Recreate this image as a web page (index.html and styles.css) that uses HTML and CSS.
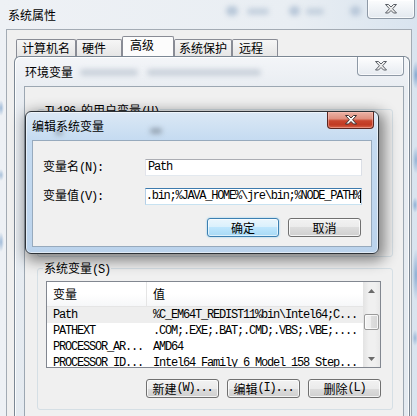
FILE: index.html
```html
<!DOCTYPE html>
<html lang="zh-CN">
<head>
<meta charset="utf-8">
<title>系统属性</title>
<link rel="stylesheet" href="styles.css">
</head>
<body>
<div class="win outer">
  <div class="tbar">
    <span class="title">系统属性</span>
    <span class="haze h1"></span><span class="haze h2"></span><span class="haze h3"></span><span class="haze h4"></span><span class="haze h5"></span>
    <div class="close idle"><svg width="12" height="10" viewBox="0 0 12 10"><path d="M0.5 0.5H3.5L6 3L8.5 0.5H11.5L7.6 4.75L11.5 9H8.5L6 6.5L3.5 9H0.5L4.4 4.75Z" fill="#ececec" stroke="#5a5f66"/></svg></div>
  </div>
  <div class="client">
    <div class="tabs">
      <div class="tab t1">计算机名</div>
      <div class="tab t2">硬件</div>
      <div class="tab t3 sel">高级</div>
      <div class="tab t4">系统保护</div>
      <div class="tab t5">远程</div>
    </div>
  </div>
</div>

<div class="win env">
  <div class="tbar">
    <span class="title">环境变量</span>
    <span class="haze e1"></span><span class="haze e2"></span>
    <div class="close idle"><svg width="12" height="10" viewBox="0 0 12 10"><path d="M0.5 0.5H3.5L6 3L8.5 0.5H11.5L7.6 4.75L11.5 9H8.5L6 6.5L3.5 9H0.5L4.4 4.75Z" fill="#ececec" stroke="#5a5f66"/></svg></div>
  </div>
  <div class="client">
    <div class="group user">
      <span class="glabel"><span class="m">TL186 </span>的用户变量<span class="m">(U)</span></span>
    </div>
    <div class="group sys">
      <span class="glabel">系统变量<span class="m">(S)</span></span>
      <div class="list">
        <div class="lv">
          <div class="lv-head"><div class="c1">变量</div><div class="c2">值</div></div>
          <div class="row sel"><div class="c1 m">Path</div><div class="c2 m">%C_EM64T_REDIST11%bin\Intel64;C...</div></div>
          <div class="row"><div class="c1 m">PATHEXT</div><div class="c2 m">.COM;.EXE;.BAT;.CMD;.VBS;.VBE;....</div></div>
          <div class="row"><div class="c1 m">PROCESSOR_AR...</div><div class="c2 m">AMD64</div></div>
          <div class="row"><div class="c1 m">PROCESSOR_ID...</div><div class="c2 m">Intel64 Family 6 Model 158 Step...</div></div>
        </div>
        <div class="vscroll">
          <div class="sb-btn"><svg width="7" height="4" viewBox="0 0 7 4"><path d="M0 4L3.5 0L7 4Z" fill="#6a6a6a"/></svg></div>
          <div class="thumb"></div>
          <div class="sb-fill"></div>
          <div class="sb-btn"><svg width="7" height="4" viewBox="0 0 7 4"><path d="M0 0L3.5 4L7 0Z" fill="#6a6a6a"/></svg></div>
        </div>
      </div>
      <div class="btnrow">
        <div class="btn">新建<span class="m">(W)...</span></div>
        <div class="btn">编辑<span class="m">(I)...</span></div>
        <div class="btn">删除<span class="m">(L)</span></div>
      </div>
    </div>
  </div>
</div>

<div class="win edit">
  <div class="tbar">
    <span class="title">编辑系统变量</span>
    <span class="haze d1"></span><span class="haze d2"></span>
    <div class="close red"><svg width="12" height="10" viewBox="0 0 12 10"><path d="M0.5 0.5H3.5L6 3L8.5 0.5H11.5L7.6 4.75L11.5 9H8.5L6 6.5L3.5 9H0.5L4.4 4.75Z" fill="#ffffff" stroke="#3a3030"/></svg></div>
  </div>
  <div class="client">
    <div class="form">
      <div class="lbl">变量名<span class="m">(N):</span></div>
      <div class="field"><span class="m">Path</span></div>
      <div class="lbl">变量值<span class="m">(V):</span></div>
      <div class="field focus"><span class="m">.bin;%JAVA_HOME%\jre\bin;%NODE_PATH%</span><span class="caret"></span></div>
    </div>
    <div class="dlgbtns">
      <div class="btn def ok">确定</div>
      <div class="btn cancel">取消</div>
    </div>
  </div>
</div>
</body>
</html>
```

FILE: styles.css
```css
* { box-sizing: border-box; }
html, body { margin: 0; padding: 0; }
body {
  width: 417px; height: 416px; overflow: hidden; position: relative;
  background: #e6ecf2;
  font-family: "Noto Sans CJK SC", "Liberation Sans", sans-serif;
  font-size: 12px; line-height: 16px; color: #000;
}
.m { font-family: "Liberation Mono", "Noto Sans CJK SC", monospace; letter-spacing: -1.2px; }

.win { position: absolute; display: flex; flex-direction: column; }
.tbar { position: relative; display: flex; align-items: flex-start; flex: none; }
.title { white-space: nowrap; position: relative; z-index: 1; }
.haze { position: absolute; border-radius: 5px; filter: blur(2.5px); }

.close { margin-left: auto; display: flex; align-items: center; justify-content: center; border-radius: 0 0 4px 4px; position: relative; z-index: 1; flex: none; }
.close.idle { border: 1px solid #8e99a6; border-top: 0; background: linear-gradient(rgba(255,255,255,.9), rgba(228,233,239,.8)); box-shadow: inset 0 0 0 1px rgba(255,255,255,.7); }
.close.red { border: 1px solid #5b2620; border-top: 0; background: linear-gradient(#ebb3a6 0%, #e0907f 42%, #c8452d 55%, #c13a22 80%, #d6664b 100%); box-shadow: inset 0 0 0 1px rgba(255,200,190,.45); }

/* outer window */
.outer {
  left: 0; top: 0; width: 417px; height: 416px;
  background:
    radial-gradient(4px 14px at 416px 75px, #86a8cf, transparent),
    radial-gradient(4px 14px at 416px 160px, #94b2d4, transparent),
    radial-gradient(3px 8px at 415px 205px, #8fb0d4, transparent),
    radial-gradient(4px 26px at 416px 275px, #8dadd2, transparent),
    radial-gradient(3px 8px at 415px 338px, #9ab7d6, transparent),
    radial-gradient(3px 8px at 1px 108px, #9fbad8, transparent),
    radial-gradient(3px 6px at 1px 175px, #a7c0da, transparent),
    radial-gradient(3px 10px at 1px 242px, #9fbad8, transparent),
    linear-gradient(90deg, #eef1f5, #e9eef3 70%, #d9e4ef);
}
.outer .tbar { height: 29px; }
.outer .title { padding: 7px 0 0 8px; }
.outer .close { width: 48px; height: 19px; margin-right: 2px; }
.h1 { left: 226px; top: 6px; width: 12px; height: 10px; background: #b9c8d9; }
.h2 { left: 247px; top: 8px; width: 22px; height: 7px; background: #c6d2df; }
.h3 { left: 289px; top: 6px; width: 11px; height: 10px; background: #b9c8d9; }
.h4 { left: 306px; top: 8px; width: 18px; height: 7px; background: #c6d2df; }
.h5 { left: 350px; top: 6px; width: 11px; height: 10px; background: #b9c8d9; }
.outer .client { flex: 1; margin: 0 5px 0 6px; border: 1px solid #a3abb4; border-bottom: 0; background: #f0f0f0; }

.tabs { display: flex; align-items: flex-end; height: 22px; margin: 6px 0 0 9px; }
.tab { height: 19px; border: 1px solid #898c95; border-bottom: 0; border-radius: 2px 2px 0 0; background: linear-gradient(#f6f6f6, #e4e4e4); padding: 0 0 0 5px; line-height: 16px; white-space: nowrap; flex: none; }
.tab.sel { height: 22px; background: #fcfcfc; padding-left: 7px; }
.t1 { width: 60px; }
.t2 { width: 46px; }
.t3 { width: 52px; }
.t4 { width: 58px; padding-left: 4px; }
.t5 { width: 46px; padding-left: 6px; }

/* environment variables window */
.env {
  left: 14px; top: 56px; width: 396px; height: 370px;
  border: 1px solid #7b8794; border-bottom: 0; border-radius: 6px 6px 0 0;
  background: linear-gradient(#f3f5f8, #e9edf2 30px, #e4eaf0);
  box-shadow: inset 1px 1px 0 rgba(255,255,255,.85), inset -1px 0 0 rgba(255,255,255,.85);
}
.env .tbar { height: 29px; }
.env .title { padding: 7px 0 0 10px; }
.env .close { width: 47px; height: 19px; margin-right: 5px; }
.e1 { left: 65px; top: 12px; width: 58px; height: 7px; background: #cbd3dc; }
.e2 { left: 132px; top: 12px; width: 114px; height: 7px; background: #cbd3dc; }
.env .client { flex: 1; margin: 0 5px 0 9px; border: 1px solid #9ca7b2; border-bottom: 0; background: #f0f0f0; padding: 0 10px 0 12px; display: flex; flex-direction: column; }

.group { position: relative; border: 1px solid #d5dfe5; border-radius: 3px; flex: none; }
.group.user { margin-top: 22px; height: 148px; }
.group.sys { margin-top: 11px; height: 142px; padding: 12px 11px 0 8px; }
.glabel { position: absolute; left: 5px; top: -9px; padding: 0 1px; background: #f0f0f0; white-space: nowrap; line-height: 16px; }
.user .glabel { left: 6px; top: -8px; }

.list { display: flex; height: 87px; border: 1px solid #828790; background: #fff; overflow: hidden; }
.lv { flex: 1; min-width: 0; }
.lv-head { display: flex; height: 25px; border-bottom: 1px solid #e5e5e5; line-height: 24px; background: linear-gradient(#fff, #fff 50%, #f6f7f9); }
.c1 { width: 100px; flex: none; padding-left: 6px; white-space: nowrap; overflow: hidden; }
.c2 { flex: 1; min-width: 0; padding-left: 6px; white-space: nowrap; overflow: hidden; }
.lv-head .c1 { border-right: 1px solid #e5e5e5; }
.row { display: flex; height: 16px; line-height: 17px; }
.row.sel { background: #eeeeee; }

.vscroll { width: 17px; flex: none; display: flex; flex-direction: column; background: linear-gradient(90deg, #e3e3e3, #f0f0f0 35%, #f0f0f0 70%, #e8e8e8); }
.sb-btn { height: 17px; flex: none; display: flex; align-items: center; justify-content: center; }
.thumb { flex: none; margin: 15px 1px 0; height: 16px; border: 1px solid #9a9a9a; border-radius: 2px; background: linear-gradient(90deg, #f5f5f5, #ededed 50%, #dedede 50%, #d5d5d5); box-shadow: inset 0 0 0 1px rgba(255,255,255,.75); }
.sb-fill { flex: 1; }

.btn { height: 19px; border: 1px solid #707070; border-radius: 3px; background: linear-gradient(#f2f2f2 0%, #ebebeb 50%, #dddddd 50%, #cfcfcf 100%); box-shadow: inset 0 0 0 1px rgba(255,255,255,.75); display: flex; align-items: center; justify-content: center; line-height: 17px; white-space: nowrap; flex: none; }
.btn.def { border-color: #3c7fb1; background: linear-gradient(#eaf6fd 0%, #d9f0fc 50%, #bee6fd 50%, #a7d9f5 100%); box-shadow: inset 0 0 0 1px rgba(255,255,255,.6), 0 0 2px #7ec8f0; }
.btnrow { display: flex; justify-content: flex-end; gap: 8px; margin-top: 11px; }
.btnrow .btn { width: 73px; }

/* edit dialog */
.edit {
  left: 25px; top: 111px; width: 354px; height: 143px;
  border: 1px solid #2e3338; border-radius: 6px;
  background: linear-gradient(#dbe8f5 0%, #c5dbf1 28px, #bbd3ec 100%);
  box-shadow: inset 0 0 0 1px rgba(255,255,255,.55), 3px 4px 14px 3px rgba(0,0,0,.45);
}
.edit .tbar { height: 28px; }
.edit .title { padding: 6px 0 0 6px; }
.edit .close { width: 47px; height: 17px; margin-right: 4px; }
.d1 { left: 29px; top: 18px; width: 8px; height: 5px; background: #97a5b4; }
.d2 { left: 124px; top: 16px; width: 12px; height: 6px; background: #97a5b4; }
.edit .client { flex: 1; margin: 0 6px 6px; border: 1px solid #97aabd; background: #f0f0f0; padding: 17px 9px 0 10px; }
.form { display: grid; grid-template-columns: 1fr 217px; row-gap: 11px; align-items: center; }
.lbl { white-space: nowrap; line-height: 16px; }
.field { height: 17px; border: 1px solid; border-color: #abadb3 #dbdfe6 #e3e9ef #e2e3ea; background: #fff; display: flex; align-items: center; overflow: hidden; padding: 0 2px; line-height: 15px; white-space: nowrap; }
.field .m { flex: none; }
.field.focus { border-color: #3d7bad #b5cfe7 #c7e2f1 #b5cfe7; justify-content: flex-end; padding: 0; }
.field.focus .m { letter-spacing: -1.25px; }
.caret { width: 1px; height: 13px; background: #000; flex: none; }
.dlgbtns { display: flex; justify-content: flex-end; gap: 9px; margin: 13px 1px 0 0; }
.dlgbtns .ok { width: 72px; }
.dlgbtns .cancel { width: 73px; }
```
